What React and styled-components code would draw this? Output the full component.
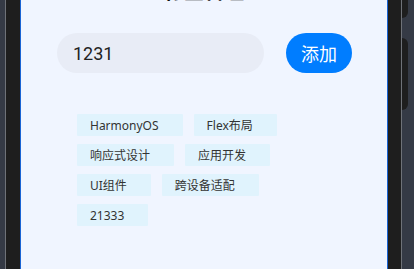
import React, { useState } from "react";
import styled, { createGlobalStyle } from "styled-components";

const GlobalStyle = createGlobalStyle`
  html, body {
    margin: 0;
    padding: 0;
    height: 100%;
    overflow: hidden;
    background: #353a45;
  }
  body {
    font-family: Roboto, "Noto Sans CJK SC", "Noto Sans", sans-serif;
  }
  #root {
    height: 100%;
  }
`;

const Desktop = styled.div`
  display: flex;
  height: 100%;
  padding-left: 5px;
`;

const Device = styled.div`
  display: flex;
  width: 397px;
  box-sizing: border-box;
  height: 100%;
  background: #1e1e1e;
  border-left: 1px solid #6f7278;
  border-right: 1px solid #6f7278;
  padding: 0 13px 0 14px;
`;

const Screen = styled.div`
  flex: 1;
  background: #f0f5ff;
  border-left: 1px solid #1a64d4;
  border-right: 1px solid #1a64d4;
  overflow: hidden;
`;

const SideRail = styled.div`
  display: flex;
  flex-direction: column;
  gap: 20px;
  margin-top: -30px;
`;

const SideKey = styled.div`
  width: 6px;
  height: ${(p) => p.$h}px;
  background: #1e1e1e;
  border-radius: 0 6px 6px 0;
`;

const Title = styled.h1`
  margin: -18px 0 0;
  height: 21px;
  line-height: 21px;
  font-size: 20px;
  font-weight: 700;
  color: #111;
  text-align: center;
`;

const InputRow = styled.div`
  display: flex;
  align-items: center;
  gap: 22px;
  margin-top: 30px;
  padding: 0 35px 0 36px;
`;

const TextInput = styled.input`
  flex: 1;
  min-width: 0;
  height: 40px;
  box-sizing: border-box;
  border: none;
  outline: none;
  border-radius: 20px;
  background: #e8ecf6;
  padding: 0 16px;
  font-family: inherit;
  font-size: 18px;
  color: #222;
`;

const AddButton = styled.button`
  width: 66px;
  height: 40px;
  border: none;
  border-radius: 20px;
  background: #007dff;
  color: #fff;
  font-family: inherit;
  font-size: 18px;
  padding: 0;
`;

const TagList = styled.div`
  display: flex;
  flex-wrap: wrap;
  gap: 8px 11px;
  margin-top: 41px;
  padding: 0 86px 0 56px;
`;

const Tag = styled.span`
  display: inline-flex;
  align-items: center;
  height: 22px;
  padding: 0 24px 0 13px;
  background: #e0f3fd;
  color: #333;
  font-family: "Noto Sans", "Noto Sans CJK SC", sans-serif;
  font-size: 12px;
  border-radius: 1px;
`;

const initialTags = [
  "HarmonyOS",
  "Flex布局",
  "响应式设计",
  "应用开发",
  "UI组件",
  "跨设备适配",
  "21333",
];

export default function App() {
  const [value, setValue] = useState("1231");
  const [tags, setTags] = useState(initialTags);

  const addHandler = () => {
    if (value.trim()) setTags([...tags, value.trim()]);
  };

  return (
    <>
      <GlobalStyle />
      <Desktop>
        <Device>
          <Screen>
            <Title>标签管理</Title>
            <InputRow>
              <TextInput
                value={value}
                onChange={(e) => setValue(e.target.value)}
              />
              <AddButton onClick={addHandler}>添加</AddButton>
            </InputRow>
            <TagList>
              {tags.map((tag, i) => (
                <Tag key={i}>{tag}</Tag>
              ))}
            </TagList>
          </Screen>
        </Device>
        <SideRail>
          <SideKey $h={48} />
          <SideKey $h={72} />
        </SideRail>
      </Desktop>
    </>
  );
}
